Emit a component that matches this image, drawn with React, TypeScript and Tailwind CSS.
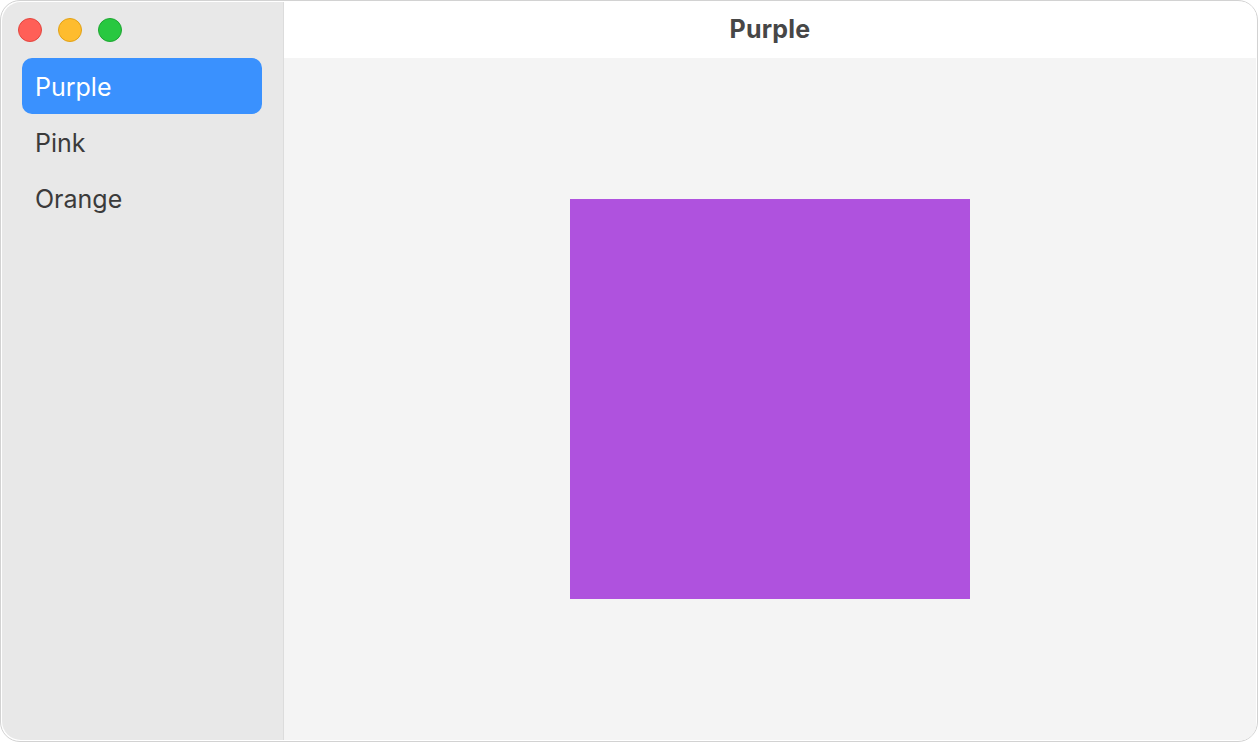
import { useState } from "react";

const items = [
  { name: "Purple", color: "#af52de" },
  { name: "Pink", color: "#ff2d55" },
  { name: "Orange", color: "#ff9500" },
];

export default function App() {
  const [selected, setSelected] = useState("Purple");
  const current = items.find((i) => i.name === selected) ?? items[0];

  return (
    <div className="h-[742px] w-[1258px] bg-white font-['Inter','Noto_Sans',sans-serif]">
      <div className="flex h-full w-full overflow-hidden rounded-[20px] border border-[#d2d2d2] bg-white p-px">
        <aside className="flex w-[282px] shrink-0 flex-col rounded-l-[19px] border-r border-[#dcdcdc] bg-[#e8e8e8]">
          <div className="flex h-[56px] items-center gap-4 pl-[16px]">
            <span className="h-6 w-6 rounded-full border border-[#e2463f] bg-[#ff5f57]" />
            <span className="h-6 w-6 rounded-full border border-[#e1a116] bg-[#febc2e]" />
            <span className="h-6 w-6 rounded-full border border-[#1ea531] bg-[#28c840]" />
          </div>
          <nav className="flex flex-col pl-[20px] pr-[21px]">
            {items.map((item) => (
              <button
                key={item.name}
                onClick={() => setSelected(item.name)}
                className={
                  item.name === selected
                    ? "flex h-[56px] items-center rounded-[10px] bg-[#3a91fe] px-[13px] pt-[3px] text-left text-[25px] text-white"
                    : "flex h-[56px] items-center rounded-[10px] px-[13px] pt-[3px] text-left text-[25px] text-[#3b3b3b]"
                }
              >
                {item.name}
              </button>
            ))}
          </nav>
        </aside>
        <main className="flex flex-1 flex-col">
          <header className="flex h-[56px] shrink-0 items-center justify-center bg-white">
            <h1 className="text-[25px] font-bold tracking-[0.2px] text-[#474747]">{current.name}</h1>
          </header>
          <div className="flex flex-1 items-center justify-center bg-[#f4f4f4]">
            <div className="h-[400px] w-[400px]" style={{ backgroundColor: current.color }} />
          </div>
        </main>
      </div>
    </div>
  );
}
